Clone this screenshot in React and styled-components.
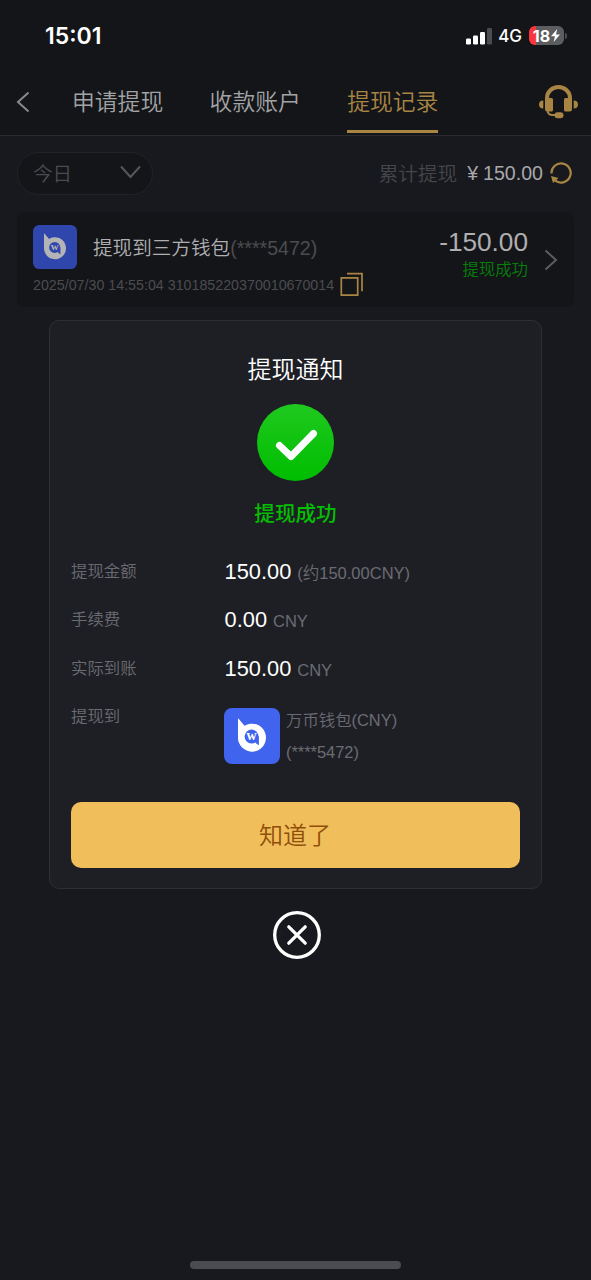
import styled, { createGlobalStyle } from "styled-components";

const tabs = ["申请提现", "收款账户", "提现记录"];

export default function App() {
    return(
        <>
            <GlobalStyle />
            <Screen>
                <Header>
                    <StatusBar />
                    <Navigation />
                </Header>
                <Filters />
                <Record />
                <NoticeModal />
                <HomeIndicator />
            </Screen>
        </>
    );
}

function StatusBar() {
    return(
        <StatusRow>
            <Clock>15:01</Clock>
            <Signal width="26" height="17" viewBox="0 0 26 17">
                <rect x="0" y="10.5" width="5" height="6" rx="1.3" fill="#fff" />
                <rect x="7" y="7.5" width="5" height="9" rx="1.3" fill="#fff" />
                <rect x="14" y="4" width="5" height="12.5" rx="1.3" fill="#fff" />
                <rect x="21" y="0" width="5" height="16.5" rx="1.3" fill="#4b4c50" />
            </Signal>
            <Network>4G</Network>
            <Battery>
                <BatteryLevel>
                    18
                    <svg width="9" height="13" viewBox="0 0 9 13">
                        <path d="M6.2 0 0 7.3h3.9L2.7 13 9 5.5H5z" fill="#fff" />
                    </svg>
                </BatteryLevel>
                <BatteryTip />
            </Battery>
        </StatusRow>
    );
}

function Navigation() {
    return(
        <Nav>
            <BackButton>
                <svg width="14" height="22" viewBox="0 0 14 22" fill="none">
                    <path d="M12.5 1.5 2 11l10.5 9.5" stroke="#88898c" strokeWidth="2" />
                </svg>
            </BackButton>
            <Tabs>
                {tabs.map((tab, index) => <Tab key={index} $active={index === 2}>{tab}</Tab>)}
            </Tabs>
            <SupportButton>
                <svg width="39" height="34" viewBox="0 0 39 34" fill="none">
                    <path d="M8 15v-2a11.5 11 0 0 1 23 0v2" stroke="#a98544" strokeWidth="4" />
                    <path d="M6 13h6.500q1.500 0 1.500 1.500V25q0 1.500-1.500 1.500H8.500Q6 26.500 6 24zM33 13h-6.500q-1.500 0-1.500 1.500V25q0 1.500 1.500 1.500h4Q33 26.500 33 24z" fill="#a98544" />
                    <path d="M4.300 15.500v8Q0 23.500 0 19.500t4.300-4zM34.700 15.500v8q4.300 0 4.300-4t-4.300-4z" fill="#a98544" />
                    <path d="M8.500 26q.8 4 5 4H18" stroke="#a98544" strokeWidth="2" />
                    <rect x="15.500" y="27.200" width="9" height="6" rx="3" fill="#a98544" />
                </svg>
            </SupportButton>
        </Nav>
    );
}

function Filters() {
    return(
        <FilterRow>
            <DateFilter>
                今日
                <svg width="21" height="14" viewBox="0 0 21 14" fill="none">
                    <path d="M1 1.500 10.500 12 20 1.500" stroke="#56575b" strokeWidth="2" />
                </svg>
            </DateFilter>
            <Total>
                <TotalLabel>累计提现</TotalLabel>
                <TotalValue><span>¥</span>150.00</TotalValue>
                <svg width="22" height="22" viewBox="0 0 22 22" fill="none">
                    <path d="M1.500 11.500A9.600 9.600 0 1 1 5 18.400" stroke="#a98544" strokeWidth="2.200" />
                    <path d="M1 14 8.500 16l-5.500 5z" fill="#a98544" />
                </svg>
            </Total>
        </FilterRow>
    );
}

function Record() {
    return(
        <Card>
            <CardMain>
                <CardTitle>
                    <WalletLogo size={44} background="#2f46ad" color="#b4b4b6" />
                    <p>提现到三方钱包<span>(****5472)</span></p>
                </CardTitle>
                <CardDetails>
                    2025/07/30 14:55:04 310185220370010670014
                    <svg width="24" height="25" viewBox="0 0 24 25" fill="none">
                        <path d="M1.300 5.800h16.400v17.400H1.300zM7 1.700h15v17.500" stroke="#a98544" strokeWidth="1.700" />
                    </svg>
                </CardDetails>
            </CardMain>
            <CardAmount>
                <strong>-150.00</strong>
                <p>提现成功</p>
            </CardAmount>
            <svg width="14" height="22" viewBox="0 0 14 22" fill="none">
                <path d="M1.500 1.500 12 11 1.500 20.500" stroke="#5b5c60" strokeWidth="2" />
            </svg>
        </Card>
    );
}

function WalletLogo(props) {
    return(
        <Logo width={props.size} height={props.size} viewBox="0 0 56 56">
            <rect width="56" height="56" rx="8" fill={props.background} />
            <path d="M14 11.200q0-1.200.8-.2L20.500 17.800A14 14 0 1 1 14 29z" fill={props.color} />
            <circle cx="27.600" cy="28.600" r="7" fill={props.background} />
            <path d="M31.500 28.500h3.400v8.700q-2.400-.8-3.400-2.700z" fill={props.background} />
            <text x="27.500" y="31.800" textAnchor="middle" fontFamily="Liberation Serif, serif" fontWeight="700" fontSize="14" fill={props.color}>w</text>
        </Logo>
    );
}

function NoticeModal() {
    return(
        <Overlay>
            <Modal>
                <ModalTitle>提现通知</ModalTitle>
                <svg width="77" height="77" viewBox="0 0 77 77" fill="none">
                    <defs>
                        <linearGradient id="success" x1="0" y1="0" x2="0" y2="1">
                            <stop offset="0" stopColor="#1fc91f" />
                            <stop offset="1" stopColor="#00bd00" />
                        </linearGradient>
                    </defs>
                    <circle cx="38.500" cy="38.500" r="38.500" fill="url(#success)" />
                    <path d="M22.500 41.500 34 52.500l22.500-23" stroke="#fff" strokeWidth="7" strokeLinecap="round" strokeLinejoin="round" />
                </svg>
                <SuccessText>提现成功</SuccessText>
                <Details>
                    <Detail label="提现金额" value="150.00" note="(约150.00CNY)" />
                    <Detail label="手续费" value="0.00" note="CNY" />
                    <Detail label="实际到账" value="150.00" note="CNY" />
                    <DetailRow>
                        <dt>提现到</dt>
                        <Wallet>
                            <WalletLogo size={56} background="#4164ee" color="#ffffff" />
                            <p>万币钱包(CNY)<br />(****5472)</p>
                        </Wallet>
                    </DetailRow>
                </Details>
                <ConfirmButton>知道了</ConfirmButton>
            </Modal>
            <CloseButton>
                <svg width="48" height="48" viewBox="0 0 48 48" fill="none" stroke="#fff">
                    <circle cx="24" cy="24" r="22.300" strokeWidth="3.300" />
                    <path d="m15.800 15.800 16.400 16.400m0-16.400L15.800 32.200" strokeWidth="3.300" strokeLinecap="round" />
                </svg>
            </CloseButton>
        </Overlay>
    );
}

function Detail(props) {
    return(
        <DetailRow>
            <dt>{props.label}</dt>
            <DetailValue>{props.value}<span>{props.note}</span></DetailValue>
        </DetailRow>
    );
}

const GlobalStyle = createGlobalStyle`
    * {
        box-sizing: border-box;
        margin: 0;
        padding: 0;
    }

    body {
        background-color: #18191e;
        font-family: "Liberation Sans", "Noto Sans CJK SC", sans-serif;
        font-weight: 350;
    }

    button {
        background: none;
        border: none;
        font: inherit;
    }

    svg {
        display: block;
        flex-shrink: 0;
    }
    `;

const Screen = styled.main`
    position: relative;
    display: flex;
    flex-direction: column;
    width: 591px;
    height: 1280px;
    overflow: hidden;
    background-color: #18191e;
    white-space: nowrap;
    `;

const Header = styled.header`
    height: 136px;
    background-color: #141519;
    border-bottom: 1px solid #29292f;
    `;

const StatusRow = styled.div`
    display: flex;
    align-items: center;
    height: 71px;
    padding: 0 24px 0 45px;
    font-family: Inter, sans-serif;
    color: #ffffff;
    `;

const Clock = styled.p`
    flex: 1;
    font-size: 23px;
    font-weight: 600;
    `;

const Signal = styled.svg`
    margin-top: 1px;
    `;

const Network = styled.p`
    margin: 1px 7px 0 6px;
    font-size: 17px;
    font-weight: 500;
    `;

const Battery = styled.div`
    display: flex;
    align-items: center;
    gap: 1px;
    `;

const BatteryLevel = styled.div`
    display: flex;
    align-items: center;
    justify-content: center;
    gap: 1px;
    width: 35px;
    height: 19px;
    border-radius: 6px;
    background: linear-gradient(90deg, #f8363b 20%, #5c5d61 20%);
    font-size: 16px;
    font-weight: 700;
    `;

const BatteryTip = styled.div`
    width: 2px;
    height: 6px;
    border-radius: 0 2px 2px 0;
    background-color: #4b4c50;
    `;

const Nav = styled.nav`
    display: flex;
    align-items: center;
    height: 64px;
    padding: 0 13px 0 16px;
    `;

const BackButton = styled.button`
    width: 56px;
    margin-top: -2px;
    `;

const Tabs = styled.div`
    display: flex;
    flex: 1;
    gap: 46.4px;
    height: 100%;
    `;

const Tab = styled.button`
    height: 62px;
    border-bottom: 3px solid ${props => props.$active ? "#a98544" : "transparent"};
    color: ${props => props.$active ? "#a98544" : "#a2a3a5"};
    font-size: 22.8px;
    `;

const SupportButton = styled.button`
    margin-top: -3px;
    `;

const FilterRow = styled.section`
    display: flex;
    align-items: center;
    justify-content: space-between;
    height: 76px;
    padding: 0 19px 2px 17px;
    `;

const DateFilter = styled.button`
    display: flex;
    align-items: center;
    justify-content: space-between;
    width: 136px;
    height: 43px;
    padding: 0 11px 2px 15px;
    border: 1px solid #222327;
    border-radius: 22px;
    background-color: #141519;
    color: #4b4c50;
    font-size: 19.6px;
    `;

const Total = styled.div`
    display: flex;
    align-items: center;
    font-size: 19.6px;
    `;

const TotalLabel = styled.p`
    margin-top: -2px;
    color: #45464a;
    `;

const TotalValue = styled.p`
    margin: 0 7px 0 10px;
    color: #a8a8aa;

    span {
        margin-right: 5px;
    }
    `;

const Card = styled.section`
    display: flex;
    align-items: center;
    height: 95px;
    margin: 0 17px;
    padding: 0 16px;
    border-radius: 8px;
    background-color: #141519;
    `;

const CardMain = styled.div`
    flex: 1;
    margin-top: 3px;
    `;

const CardTitle = styled.div`
    display: flex;
    align-items: center;
    gap: 16px;
    color: #afafb1;
    font-size: 19.6px;

    p {
        margin-top: -2px;
    }

    span {
        color: #4b4c50;
    }
    `;

const CardDetails = styled.div`
    display: flex;
    align-items: center;
    gap: 6px;
    height: 25px;
    margin-top: 3px;
    color: #4b4c50;
    font-size: 14.25px;
    `;

const CardAmount = styled.div`
    margin: -12px 16px 0 0;
    text-align: right;

    strong {
        display: block;
        color: #afafb1;
        font-size: 26.2px;
        font-weight: 400;
        line-height: 30px;
    }

    p {
        color: #05800a;
        font-size: 16.4px;
        line-height: 24px;
    }
    `;

const Logo = styled.svg`
    flex-shrink: 0;
    `;

const Overlay = styled.div`
    position: absolute;
    inset: 0;
    display: flex;
    flex-direction: column;
    align-items: center;
    padding-top: 320px;
    `;

const Modal = styled.section`
    display: flex;
    flex-direction: column;
    align-items: center;
    width: 493px;
    height: 569px;
    padding: 31px 21px 0;
    border: 1px solid #2e2f35;
    border-radius: 10px;
    background-color: #1e1f25;
    `;

const ModalTitle = styled.h1`
    margin-bottom: 16px;
    color: #ffffff;
    font-size: 24px;
    font-weight: 350;
    line-height: 36px;
    `;

const SuccessText = styled.p`
    margin-top: 18px;
    color: #04be02;
    font-size: 20.6px;
    font-weight: 500;
    line-height: 30px;
    `;

const Details = styled.dl`
    width: 100%;
    margin-top: 18px;
    color: #6b6c73;
    font-size: 16.4px;
    `;

const DetailRow = styled.div`
    display: grid;
    grid-template-columns: 153px 1fr;
    height: 48.4px;
    line-height: 48px;
    `;

const DetailValue = styled.dd`
    padding-left: 0.6px;
    color: #ffffff;
    font-size: 21.8px;
    line-height: 49px;

    span {
        margin-left: 6px;
        color: #6b6c73;
        font-size: 16.5px;
    }
    `;

const Wallet = styled.dd`
    display: flex;
    gap: 6px;
    padding-top: 16px;

    p {
        margin-top: -4px;
        line-height: 32px;
    }
    `;

const ConfirmButton = styled.button`
    width: 449px;
    height: 66px;
    margin: auto 0 20px;
    padding: 0 1px 4px 0;
    border-radius: 10px;
    background-color: #f0bf5b;
    color: #8f4e09;
    font-size: 24px;
    `;

const CloseButton = styled.button`
    margin: 22px 0 0 2px;
    `;

const HomeIndicator = styled.div`
    width: 211px;
    height: 8px;
    margin: auto auto 11px;
    border-radius: 4px;
    background-color: #4b4c50;
    `;
